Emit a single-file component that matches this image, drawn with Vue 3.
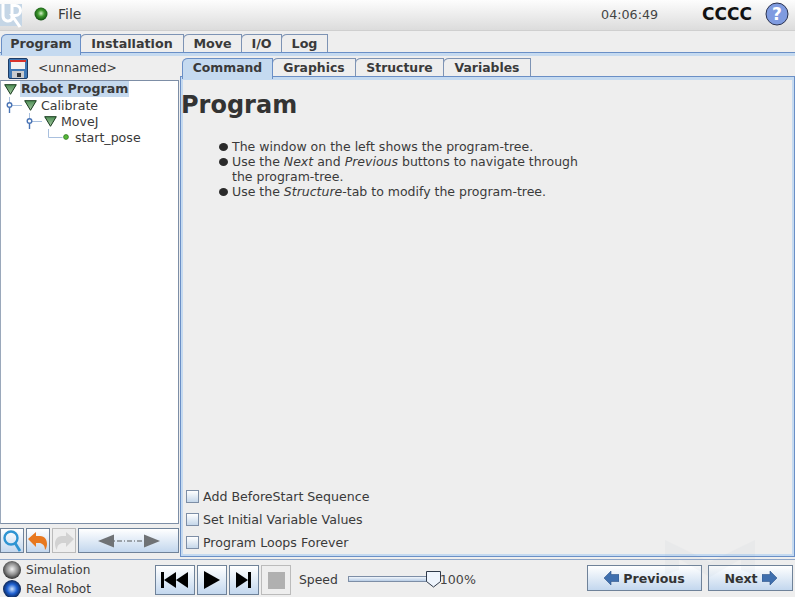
<script setup>
const mainTabs = [
  { label: 'Program', active: true, w: 80 },
  { label: 'Installation', w: 104 },
  { label: 'Move', w: 59 },
  { label: 'I/O', w: 41 },
  { label: 'Log', w: 47 }
]
const subTabs = [
  { label: 'Command', active: true, w: 91 },
  { label: 'Graphics', w: 84 },
  { label: 'Structure', w: 89 },
  { label: 'Variables', w: 88 }
]
const checks = ['Add BeforeStart Sequence', 'Set Initial Variable Values', 'Program Loops Forever']
</script>

<template>
  <div class="app">
    <header class="top">
      <svg class="logo" width="23" height="28" viewBox="0 0 23 28">
        <rect x="0" y="3" width="22" height="22" fill="#c5d6e6"/>
        <path d="M3 3v12a5 5 0 0 0 9 3V3M12 4.500h3.500a5 5 0 0 1 0 10H12l8 11.500" fill="none" stroke="#fff" stroke-width="3"/>
      </svg>
      <svg class="status" width="14" height="14" viewBox="0 0 14 14">
        <defs><radialGradient id="g" cx="50%" cy="45%" r="55%"><stop offset="0" stop-color="#d4f0c8"/><stop offset=".45" stop-color="#3f9a2e"/><stop offset="1" stop-color="#0f4d10"/></radialGradient></defs>
        <circle cx="7" cy="7" r="6.5" fill="url(#g)"/>
      </svg>
      <span class="file">File</span>
      <span class="clock">04:06:49</span>
      <span class="cccc">CCCC</span>
      <svg class="help" width="24" height="24" viewBox="0 0 24 24">
        <circle cx="12" cy="12" r="11" fill="#7f9be0" stroke="#2b3350" stroke-width="1"/>
        <text x="12" y="18" text-anchor="middle" class="q">?</text>
      </svg>
    </header>

    <nav class="tabs main-tabs">
      <div v-for="t in mainTabs" :key="t.label" class="tab" :class="{ active: t.active }" :style="{ width: t.w + 'px' }">{{ t.label }}</div>
    </nav>
    <div class="band"></div>

    <main class="body">
      <aside class="left">
        <div class="name-row">
          <svg width="20" height="21" viewBox="0 0 20 21">
            <rect x=".5" y=".5" width="19" height="20" rx="1.5" fill="#3f78b5" stroke="#1d3c66"/>
            <rect x="2" y="2" width="16" height="2" fill="#d8322c"/>
            <rect x="3" y="4" width="14" height="7" fill="#f2f2f2"/>
            <rect x="4" y="13" width="12" height="7" fill="#c9ccd0"/>
            <rect x="9" y="15" width="4" height="4" fill="#34383d"/>
          </svg>
          <span class="unnamed">&lt;unnamed&gt;</span>
        </div>
        <div class="tree">
          <div class="node root">
            <svg width="13" height="11" viewBox="0 0 13 11"><defs><linearGradient id="tri" x1="0" y1="0" x2="0" y2="1"><stop offset="0" stop-color="#4f8f56"/><stop offset="1" stop-color="#a5c9a2"/></linearGradient></defs><path d="M.7.7h11.600L6.500 10.300z" fill="url(#tri)" stroke="#173a1c"/></svg>
            <span class="sel">Robot Program</span>
          </div>
          <div class="node lvl1">
            <svg width="20" height="16" viewBox="0 0 20 16"><path d="M5.500 0v6M8 8.500h10" stroke="#a9c0de" fill="none"/><circle cx="5.500" cy="8" r="2.300" fill="#fff" stroke="#4a74b5" stroke-width="1.400"/><path d="M5.500 10v6" stroke="#4a74b5" stroke-width="1.400"/></svg>
            <svg width="13" height="11" viewBox="0 0 13 11"><path d="M.7.7h11.600L6.500 10.300z" fill="url(#tri)" stroke="#173a1c"/></svg>
            <span>Calibrate</span>
          </div>
          <div class="node lvl2">
            <svg width="20" height="16" viewBox="0 0 20 16"><path d="M5.500 0v6M8 8.500h10" stroke="#a9c0de" fill="none"/><circle cx="5.500" cy="8" r="2.300" fill="#fff" stroke="#4a74b5" stroke-width="1.400"/><path d="M5.500 10v6" stroke="#4a74b5" stroke-width="1.400"/></svg>
            <svg width="13" height="11" viewBox="0 0 13 11"><path d="M.7.7h11.600L6.500 10.300z" fill="url(#tri)" stroke="#173a1c"/></svg>
            <span>MoveJ</span>
          </div>
          <div class="node lvl3">
            <svg width="24" height="16" viewBox="0 0 24 16"><path d="M1.500 0v8.500h14" stroke="#a9c0de" fill="none"/><circle cx="19" cy="8" r="2.400" fill="#57b83a" stroke="#2f7a1d" stroke-width=".8"/></svg>
            <span>start_pose</span>
          </div>
        </div>
        <div class="tools">
          <button class="btn sq">
            <svg width="22" height="24" viewBox="0 0 22 24"><circle cx="10" cy="9" r="6.500" fill="none" stroke="#2e94d2" stroke-width="2.400"/><path d="M14 14l5 8" stroke="#2e94d2" stroke-width="2.800"/></svg>
          </button>
          <button class="btn sq">
            <svg width="22" height="20" viewBox="0 0 22 20"><path d="M1 8l8-7v4h4c5 0 7 4 7 8 0 2-1 5-2 6 0-5-3-7-6-7H9v4z" fill="#e8781f"/></svg>
          </button>
          <button class="btn sq off">
            <svg width="22" height="20" viewBox="0 0 22 20"><path d="M21 8l-8-7v4H9c-5 0-7 4-7 8 0 2 1 5 2 6 0-5 3-7 6-7h3v4z" fill="#d2d2d2"/></svg>
          </button>
          <button class="btn wide">
            <svg width="62" height="14" viewBox="0 0 62 14"><path d="M0 7l16-6.500v13z" fill="#6f7275"/><path d="M46 .5L62 7l-16 6.500z" fill="#6f7275"/><path d="M16 7h30" stroke="#55585b" stroke-width="1.200" stroke-dasharray="1 2 5 2"/></svg>
          </button>
        </div>
      </aside>

      <section class="right">
        <nav class="tabs sub-tabs">
          <div v-for="t in subTabs" :key="t.label" class="tab" :class="{ active: t.active }" :style="{ width: t.w + 'px' }">{{ t.label }}</div>
        </nav>
        <div class="panel">
          <h1>Program</h1>
          <ul>
            <li>The window on the left shows the program-tree.</li>
            <li>Use the <i>Next</i> and <i>Previous</i> buttons to navigate through<br>the program-tree.</li>
            <li>Use the <i>Structure</i>-tab to modify the program-tree.</li>
          </ul>
          <div class="checks">
            <label v-for="c in checks" :key="c" class="check"><span class="box"></span>{{ c }}</label>
          </div>
        </div>
      </section>
    </main>

    <footer class="bottom">
      <div class="modes">
        <div class="mode">
          <svg width="20" height="20" viewBox="0 0 20 20"><defs><radialGradient id="gr" cx="50%" cy="45%" r="55%"><stop offset="0" stop-color="#f2f2f2"/><stop offset=".6" stop-color="#8a8a8a"/><stop offset="1" stop-color="#2e2e2e"/></radialGradient></defs><circle cx="10" cy="10" r="9" fill="url(#gr)"/></svg>
          <span>Simulation</span>
        </div>
        <div class="mode">
          <svg width="20" height="20" viewBox="0 0 20 20"><defs><radialGradient id="bl" cx="50%" cy="50%" r="55%"><stop offset="0" stop-color="#cfe4ff"/><stop offset=".5" stop-color="#1d5fd0"/><stop offset="1" stop-color="#0b1a3a"/></radialGradient></defs><circle cx="10" cy="10" r="9" fill="url(#bl)"/></svg>
          <span>Real Robot</span>
        </div>
      </div>
      <div class="player">
        <button class="btn play w40"><svg width="28" height="18" viewBox="0 0 28 18"><path d="M0 1h3v16H0zM3 9l12-8v16zM15 9l12-8v16z" fill="#000"/></svg></button>
        <button class="btn play"><svg width="18" height="18" viewBox="0 0 18 18"><path d="M1 0l16 9-16 9z" fill="#000"/></svg></button>
        <button class="btn play"><svg width="18" height="18" viewBox="0 0 18 18"><path d="M1 1l12 8-12 8zM13 1h3v16h-3z" fill="#000"/></svg></button>
        <button class="btn play off"><span class="stop"></span></button>
      </div>
      <span class="speed">Speed</span>
      <div class="slider">
        <div class="track"></div>
        <svg class="thumb" width="15" height="17" viewBox="0 0 15 17"><path d="M.5.5h14v10L7.500 16 .5 10.500z" fill="#eef4fc" stroke="#2f3a4a"/></svg>
      </div>
      <span class="pct">100%</span>
      <button class="btn nav prev">
        <svg width="15" height="14" viewBox="0 0 15 14"><path d="M0 7l7-7v3.500h8v7H7V14z" fill="#3f6fae" stroke="#2b5288" stroke-width=".6"/></svg>
        Previous
      </button>
      <button class="btn nav next">
        Next
        <svg width="15" height="14" viewBox="0 0 15 14"><path d="M15 7L8 0v3.500H0v7h8V14z" fill="#3f6fae" stroke="#2b5288" stroke-width=".6"/></svg>
      </button>
    </footer>

    <svg class="mark" width="155" height="62" viewBox="0 0 155 62">
      <path d="M25 5l45 22 45-22v35l-14-5V24L70 42 39 24v11l-14 5z" fill="#8fa3b8"/>
    </svg>
  </div>
</template>

<style>
html, body { margin: 0; background: #eeeeee; }
</style>

<style scoped>
.app { position: relative; width: 795px; height: 597px; overflow: hidden; background: #eeeeee; display: flex; flex-direction: column; font: 12.6px "DejaVu Sans", sans-serif; color: #3a3a3a; }
.top { height: 31px; box-sizing: border-box; display: flex; align-items: center; padding-bottom: 2px; background: linear-gradient(#fdfdfd, #dcdcdc); border-bottom: 1px solid #cfcfcf; flex: none; }
.logo { margin-top: 2px; width: 23px; }
.status { margin-left: 11px; }
.file { margin-left: 10px; font-size: 14px; }
.clock { margin-left: auto; font-size: 12.7px; color: #444; }
.cccc { margin-left: 44px; font-weight: 700; font-size: 17px; color: #111; }
.help { margin-left: 13px; margin-right: 6px; }
.q { font: 700 17px "DejaVu Sans", sans-serif; fill: #fff; }

.tabs { display: flex; flex: none; height: 18px; }
.tab { box-sizing: border-box; height: 18px; border: 1px solid #7d93b4; border-bottom: 0; margin-right: -1px; text-align: center; font-weight: 700; line-height: 17px; color: #3a3a3a; background: #eeeeee; border-top-left-radius: 6px 5px; }
.tab.active { position: relative; z-index: 1; height: 21px; background: #c5daf0; border-color: #6a8fc6; }
.main-tabs { margin-top: 3px; padding-left: 1px; font-size: 12.7px; }
.band { height: 4px; flex: none; border-top: 1px solid #6a8fc6; background: #c5daf0; box-sizing: border-box; }

.body { flex: 1; min-height: 0; display: flex; }
.left { width: 179px; flex: none; display: flex; flex-direction: column; }
.name-row { height: 24px; flex: none; display: flex; align-items: center; padding-left: 8px; }
.unnamed { margin-left: 10px; font-size: 12.3px; }
.tree { height: 444px; flex: none; box-sizing: border-box; background: #fff; border: 1px solid #7d8ea6; border-left: 1px solid #9aa8bb; }
.node { height: 16px; display: flex; align-items: center; white-space: nowrap; }
.root { padding-left: 3px; font-weight: 700; }
.sel { background: #c5d9ee; margin-left: 3px; padding: 0 1px; line-height: 16px; }
.lvl1 { padding-left: 3px; }
.lvl2 { padding-left: 23px; }
.lvl1 span, .lvl2 span { margin-left: 4px; }
.lvl3 { padding-left: 46px; }
.lvl3 span { margin-left: 4px; }

.btn { box-sizing: border-box; padding: 0; display: flex; align-items: center; justify-content: center; font: inherit; color: inherit; background: linear-gradient(#ffffff, #c3d7ee); border: 1px solid #6f8299; }
.btn.off { background: #eeeeee; border-color: #bbb; }
.tools { margin-top: 4px; display: flex; gap: 2px; height: 25px; }
.sq { width: 24px; height: 25px; }
.wide { width: 101px; height: 25px; }

.right { flex: 1; min-width: 0; display: flex; flex-direction: column; margin-left: 1px; padding-top: 2px; }
.sub-tabs { padding-left: 2px; font-size: 12.4px; }
.panel { box-sizing: border-box; width: 615px; height: 481px; border: 1px solid #6a8fc6; box-shadow: inset 0 3px 0 #c5daf0, inset 0 -2px 0 #c5daf0, inset -2px 0 0 #c5daf0, inset 2px 0 0 #c5daf0; display: flex; flex-direction: column; padding: 0 0 5px 0; }
h1 { margin: 14px 0 0 0; font-size: 24px; line-height: 28px; font-weight: 700; color: #333; }
ul { margin: 20px 0 0 0; padding: 0 0 0 51px; list-style: none; font-size: 12.5px; line-height: 15px; }
li { position: relative; }
li::before { content: ""; position: absolute; left: -13px; top: 4px; width: 9px; height: 8px; border-radius: 50%; background: #2a2a2a; }
.checks { margin-top: auto; padding-left: 5px; display: flex; flex-direction: column; gap: 5px; }
.check { display: flex; align-items: center; height: 18px; }
.box { width: 13px; height: 13px; box-sizing: border-box; border: 1px solid #7d8ea6; background: linear-gradient(#fff, #c5d7ea); margin-right: 4px; }

.bottom { height: 38px; flex: none; display: flex; align-items: flex-start; border-top: 1px solid #8ea6c8; box-sizing: border-box; }
.modes { width: 155px; flex: none; padding-left: 2px; box-sizing: border-box; font-size: 12.1px; }
.mode { display: flex; align-items: center; height: 19px; gap: 4px; }
.player { display: flex; gap: 2px; margin-top: 5px; }
.play { width: 30px; height: 30px; }
.w40 { width: 40px; }
.stop { display: block; width: 17px; height: 17px; background: #b0b0b0; }
.speed { margin: 5px 0 0 8px; line-height: 30px; font-size: 12.4px; }
.slider { position: relative; width: 92px; margin: 4px 0 0 10px; height: 30px; display: flex; align-items: center; }
.track { box-sizing: border-box; width: 85px; height: 6px; border: 1px solid #7d8ea6; background: linear-gradient(#f0f5fb, #b8cde6); }
.thumb { position: absolute; left: 78px; top: 7px; }
.pct { margin-top: 5px; line-height: 30px; color: #444; }
.nav { height: 26px; margin-top: 5px; font-weight: 700; gap: 4px; color: #333; font-size: 12.6px; }
.prev { width: 115px; margin-left: auto; }
.next { width: 85px; margin-left: 6px; margin-right: 2px; }

.mark { position: absolute; left: 640px; top: 535px; opacity: .06; pointer-events: none; }
</style>
